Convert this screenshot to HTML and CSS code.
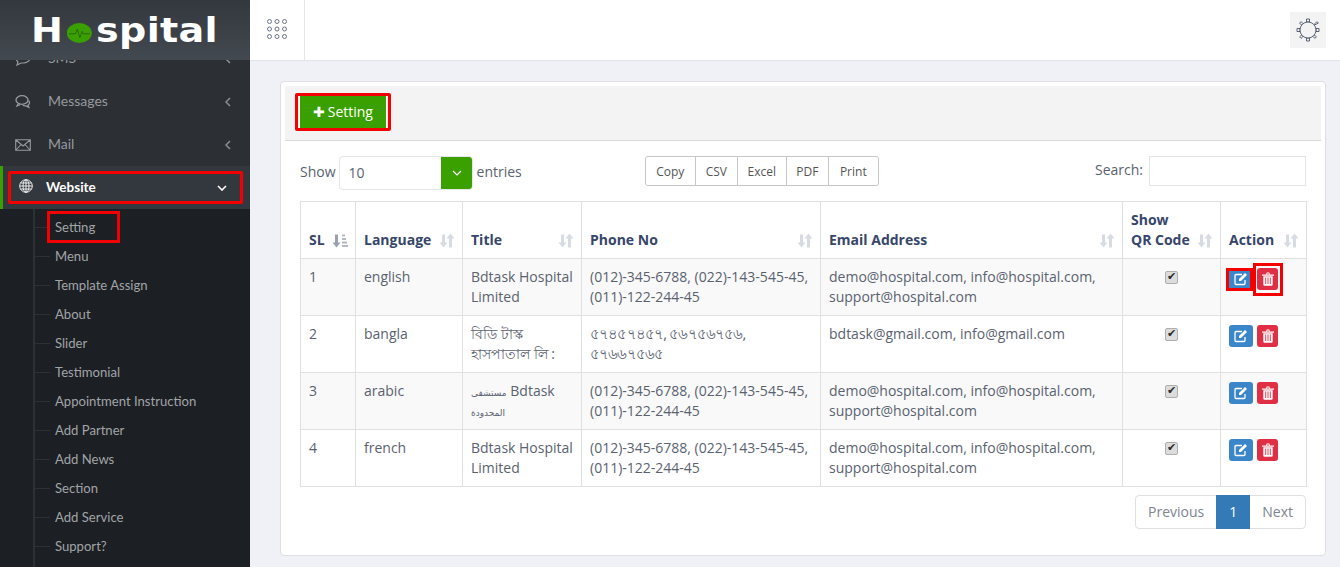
FILE: index.html
```html
<!DOCTYPE html>
<html lang="en">
<head>
<meta charset="utf-8">
<title>Hospital - Website Setting</title>
<link rel="stylesheet" href="styles.css">
</head>
<body>
<svg class="defs" width="0" height="0" aria-hidden="true">
  <symbol id="sort" viewBox="0 0 16 14">
    <path d="M3 1h3v8h2.500L4.500 14 .5 9H3zM10 5H7.500l4-5 4 5H13v9h-3z" fill="currentColor"/>
  </symbol>
  <symbol id="edit" viewBox="0 0 14 14">
    <path d="M11 8v3.500a1 1 0 0 1-1 1H2a1 1 0 0 1-1-1v-8a1 1 0 0 1 1-1h6" fill="none" stroke="currentColor" stroke-width="1.300"/>
    <path d="M5 7l6-6 2 2-6 6H5z" fill="currentColor"/>
  </symbol>
  <symbol id="trash" viewBox="0 0 12 14">
    <path d="M0 2.500h12v1.200H0zM4 2.500 4.700.5h2.600L8 2.500H7L6.700 1.500H5.300L5 2.500zM1.300 4.300h9.400v8.200a1.200 1.200 0 0 1-1.200 1.200h-7a1.200 1.200 0 0 1-1.200-1.200z" fill="currentColor"/>
    <path d="M3.700 5.500v6.500M6 5.500v6.500M8.300 5.500v6.500" stroke="#e02f44" stroke-width=".9"/>
  </symbol>
  <symbol id="chev" viewBox="0 0 6 10">
    <path d="M5 1 1 5l4 4" fill="none" stroke="currentColor" stroke-width="1.500"/>
  </symbol>
</svg>
<div class="app">
  <aside class="side">
    <div class="logo"><div class="logo-in"><span>H</span><svg class="logo-o" viewBox="0 0 26 26" preserveAspectRatio="none" aria-hidden="true"><circle cx="13" cy="13" r="13" fill="#3aa000"/><path d="M2 14h7l2-6 2.500 11 2.500-8 1 3h7" fill="none" stroke="#2a5f10" stroke-width="1"/></svg><span>spital</span></div></div>
    <nav class="nav">
      <ul class="menu">
        <li class="item">
          <svg class="ico" viewBox="0 0 16 16" aria-hidden="true"><path d="M8 2c4 0 7 2.200 7 5s-3 5-7 5H6l-4 2 1-3C2 10 1 8.500 1 7c0-2.800 3-5 7-5z" fill="none" stroke="currentColor" stroke-width="1.200"/></svg>
          <span class="lbl">SMS</span><svg class="chev"><use href="#chev"/></svg>
        </li>
        <li class="item">
          <svg class="ico" viewBox="0 0 16 16" aria-hidden="true"><ellipse cx="7" cy="6" rx="6" ry="4.300" fill="none" stroke="currentColor" stroke-width="1.300"/><path d="M3 10 2 12l3-1.300M13.500 6.500c1.500 1.500 1.300 3.500-.5 4.700l.8 2-3-1.300c-1.200.1-2.200-.1-3-.6" fill="none" stroke="currentColor" stroke-width="1.300"/></svg>
          <span class="lbl">Messages</span><svg class="chev"><use href="#chev"/></svg>
        </li>
        <li class="item">
          <svg class="ico" viewBox="0 0 16 14" aria-hidden="true"><path d="M.7 1.700h14.600v10.600H.7zM1 2l7 6 7-6M1 12l5-5.500M15 12l-5-5.500" fill="none" stroke="currentColor" stroke-width="1.100"/></svg>
          <span class="lbl">Mail</span><svg class="chev"><use href="#chev"/></svg>
        </li>
        <li class="item active">
          <div class="item-mark">
            <svg class="ico globe" viewBox="0 0 14 14" aria-hidden="true"><g fill="none" stroke="currentColor" stroke-width=".9"><circle cx="7" cy="7" r="6.300"/><ellipse cx="7" cy="7" rx="3" ry="6.300"/><path d="M7 .7v12.600M.7 7h12.600M1.500 4h11M1.500 10h11"/></g></svg>
            <span class="lbl">Website</span>
            <svg class="down" viewBox="0 0 10 6" aria-hidden="true"><path d="M1 1l4 4 4-4" fill="none" stroke="currentColor" stroke-width="1.600"/></svg>
          </div>
        </li>
      </ul>
      <ul class="sub">
        <li class="current"><span>Setting</span></li>
        <li><span>Menu</span></li>
        <li><span>Template Assign</span></li>
        <li><span>About</span></li>
        <li><span>Slider</span></li>
        <li><span>Testimonial</span></li>
        <li><span>Appointment Instruction</span></li>
        <li><span>Add Partner</span></li>
        <li><span>Add News</span></li>
        <li><span>Section</span></li>
        <li><span>Add Service</span></li>
        <li><span>Support?</span></li>
      </ul>
    </nav>
  </aside>

  <div class="main">
    <header class="top">
      <div class="apps">
        <svg viewBox="0 0 20 20" width="20" height="20" aria-hidden="true"><g fill="none" stroke="#5b6478" stroke-width=".9"><circle cx="2.500" cy="2.500" r="2"/><circle cx="10" cy="2.500" r="2"/><circle cx="17.500" cy="2.500" r="2"/><circle cx="2.500" cy="10" r="2"/><circle cx="10" cy="10" r="2"/><circle cx="17.500" cy="10" r="2"/><circle cx="2.500" cy="17.500" r="2"/><circle cx="10" cy="17.500" r="2"/><circle cx="17.500" cy="17.500" r="2"/></g></svg>
      </div>
      <button class="gear" type="button" aria-label="Settings">
        <svg viewBox="0 0 24 24" width="24" height="24" aria-hidden="true"><g fill="#f3f3f3" stroke="#4a5568" stroke-width=".9"><path d="M10.500 4V1h3v3zM10.500 20v3h3v-3zM4 10.500H1v3h3zM20 10.500h3v3h-3z"/><path d="M5.500 7 3.600 5.100l1.500-1.500L7 5.500zM19 5.500l1.900-1.900 1.500 1.500L18.500 7zM5.500 17l-1.900 1.900 1.500 1.500L7 18.500zM17 18.500l1.900 1.900 1.500-1.500-1.900-1.900z"/><circle cx="12" cy="12" r="8"/></g></svg>
      </button>
    </header>

    <section class="content">
      <div class="card">
        <div class="card-head">
          <a class="add" href="#"><b class="plus">✚</b> Setting</a>
        </div>
        <div class="card-body">
          <div class="tools">
            <div class="len">
              <span>Show</span>
              <div class="pick"><span class="pick-val">10</span><span class="pick-arrow"><svg viewBox="0 0 10 6" width="10" height="6" aria-hidden="true"><path d="M1 1l4 4 4-4" fill="none" stroke="#fff" stroke-width="1.200"/></svg></span></div>
              <span>entries</span>
            </div>
            <div class="exports">
              <button type="button" class="x50">Copy</button><button type="button" class="x42">CSV</button><button type="button" class="x49">Excel</button><button type="button" class="x42">PDF</button><button type="button" class="x50">Print</button>
            </div>
            <label class="search">Search: <input type="text"></label>
          </div>

          <table class="grid">
            <colgroup><col class="c1"><col class="c2"><col class="c3"><col class="c4"><col class="c5"><col class="c6"><col class="c7"></colgroup>
            <thead>
              <tr>
                <th><div class="th"><span>SL</span><svg class="sort on" viewBox="0 0 16 14" aria-hidden="true"><path d="M3 1h3v8h2.500L4.500 14 .5 9H3z" fill="currentColor"/><path d="M10 1h3v2h-3zM10 4.500h4v2h-4zM10 8h5v2h-5zM10 11.500h6v2h-6z" fill="#b3b8c4"/></svg></div></th>
                <th><div class="th"><span>Language</span><svg class="sort"><use href="#sort"/></svg></div></th>
                <th><div class="th"><span>Title</span><svg class="sort"><use href="#sort"/></svg></div></th>
                <th><div class="th"><span>Phone No</span><svg class="sort"><use href="#sort"/></svg></div></th>
                <th><div class="th"><span>Email Address</span><svg class="sort"><use href="#sort"/></svg></div></th>
                <th><div class="th"><span>Show<br>QR Code</span><svg class="sort"><use href="#sort"/></svg></div></th>
                <th><div class="th"><span>Action</span><svg class="sort"><use href="#sort"/></svg></div></th>
              </tr>
            </thead>
            <tbody>
              <tr>
                <td>1</td><td>english</td><td>Bdtask Hospital Limited</td>
                <td>(012)-345-6788, (022)-143-545-45, (011)-122-244-45</td>
                <td>demo@hospital.com, info@hospital.com, support@hospital.com</td>
                <td class="mid"><input class="qr" type="checkbox" checked disabled></td>
                <td class="acts"><a class="btn blue mark-a" href="#"><svg><use href="#edit"/></svg></a><a class="btn red mark-b" href="#"><svg><use href="#trash"/></svg></a></td>
              </tr>
              <tr>
                <td>2</td><td>bangla</td><td>বিডি টাস্ক হাসপাতাল লি :</td>
                <td><span class="bn">৫৭৪৫৭৪৫৭, ৫৬৭৫৬৭৫৬, ৫৭৬৬৭৫৬৫</span></td>
                <td>bdtask@gmail.com, info@gmail.com</td>
                <td class="mid"><input class="qr" type="checkbox" checked disabled></td>
                <td class="acts"><a class="btn blue" href="#"><svg><use href="#edit"/></svg></a><a class="btn red" href="#"><svg><use href="#trash"/></svg></a></td>
              </tr>
              <tr>
                <td>3</td><td>arabic</td><td><span class="ar">مستشفى</span> Bdtask <span class="ar">المحدودة</span></td>
                <td>(012)-345-6788, (022)-143-545-45, (011)-122-244-45</td>
                <td>demo@hospital.com, info@hospital.com, support@hospital.com</td>
                <td class="mid"><input class="qr" type="checkbox" checked disabled></td>
                <td class="acts"><a class="btn blue" href="#"><svg><use href="#edit"/></svg></a><a class="btn red" href="#"><svg><use href="#trash"/></svg></a></td>
              </tr>
              <tr>
                <td>4</td><td>french</td><td>Bdtask Hospital Limited</td>
                <td>(012)-345-6788, (022)-143-545-45, (011)-122-244-45</td>
                <td>demo@hospital.com, info@hospital.com, support@hospital.com</td>
                <td class="mid"><input class="qr" type="checkbox" checked disabled></td>
                <td class="acts"><a class="btn blue" href="#"><svg><use href="#edit"/></svg></a><a class="btn red" href="#"><svg><use href="#trash"/></svg></a></td>
              </tr>
            </tbody>
          </table>

          <div class="pager">
            <a class="pg first" href="#">Previous</a><a class="pg now" href="#">1</a><a class="pg last" href="#">Next</a>
          </div>
        </div>
      </div>
    </section>
  </div>
</div>
</body>
</html>
```
FILE: styles.css
```css
*, *::before, *::after { box-sizing: border-box; }
html, body { margin: 0; height: 567px; overflow: hidden; }
body {
  font-family: "Open Sans", "Noto Sans", "DejaVu Sans", sans-serif;
  font-size: 14px;
  line-height: 20px;
  color: #5a6270;
  background: #f0f1f6;
}
ul { list-style: none; margin: 0; padding: 0; }
a { text-decoration: none; color: inherit; }
.defs { position: absolute; }

.app { display: flex; height: 567px; }

/* sidebar */
.side { width: 250px; flex: none; display: flex; flex-direction: column; background: #2c2f34; }
.logo {
  height: 60px; flex: none; position: relative; z-index: 1;
  padding: 0 0 0 31px;
  background: linear-gradient(#33383e, #434950);
  color: #fff;
  font-family: "DejaVu Sans", sans-serif;
  font-weight: 700; font-size: 34px; letter-spacing: .3px;
}
.logo-in {
  display: flex; align-items: flex-start; height: 60px; line-height: 60px;
  transform: scaleX(1.12); transform-origin: 0 50%;
}
.logo-o { width: 22.300px; height: 20px; margin: 23px 3.500px 0 3.500px; flex: none; }
.nav { flex: 1; overflow: hidden; }
.menu { margin-top: -23px; }
.item {
  height: 43px; display: flex; align-items: center; padding: 0 16px 0 15px;
  color: #979a9f; font-family: "Lato", sans-serif; font-size: 14px;
}
.item .lbl { padding-bottom: 2px; }
.ico { width: 16px; height: 16px; flex: none; margin-right: 17px; }
.lbl { flex: 1; }
.chev { width: 6px; height: 10px; flex: none; margin: 0 3px 0 0; color: #8c8f94; }
.active {
  padding: 0; background: #33373e; color: #fff; font-weight: 700;
  border-left: 3px solid #3aa000; font-size: 13.500px;
}
.item-mark {
  height: 33px; width: 235px; margin-left: 5px;
  border: 3px solid #f50000;
  display: flex; align-items: center; padding: 0 13px 0 8px;
  border-radius: 2px;
}
.globe { width: 14px; height: 14px; margin-right: 13px; margin-top: -3px; }
.down { width: 10px; height: 6px; flex: none; }
.sub {
  background: #1c1f23; height: 400px; padding: 4px 0 0 34px;
  background-image: linear-gradient(#2c3136, #2c3136);
  background-repeat: no-repeat; background-size: 2px 100%; background-position: 33px 0;
}
.sub li {
  height: 29px; display: flex; align-items: center;
  color: #a2a5a8; font-family: "Lato", sans-serif; font-size: 13.100px;
  background: linear-gradient(#2c3136, #2c3136) no-repeat 0 50% / 16px 1px;
  padding: 0 0 2px 21px;
}
.sub .current span {
  outline: 3px solid #f50000;
  margin-left: -5px; padding: 3px 20px 3px 5px; line-height: 20px; width: 67px;
}

/* top bar */
.main { flex: 1; min-width: 0; display: flex; flex-direction: column; }
.top {
  height: 61px; flex: none; background: #fff; border-bottom: 1px solid #e1e3ea;
  display: flex; align-items: center; justify-content: space-between; padding-right: 14px;
}
.apps {
  width: 55px; height: 60px; border-right: 1px solid #e4e6ec;
  display: flex; align-items: center; padding: 0 0 3px 17px;
}
.gear {
  width: 36px; height: 36px; padding: 0; border: 0; background: #f3f3f3;
  display: flex; align-items: center; justify-content: center;
}

/* card */
.content { padding: 20px 14px 0 30px; }
.card {
  height: 475px; background: #fff; border: 1px solid #dfdfe2; border-radius: 4px; padding: 4px;
}
.card-head {
  height: 55px; background: #f3f3f3; border-bottom: 1px solid #d9d9d9;
  padding: 10px 0 0 14px; border-radius: 3px 3px 0 0;
}
.add {
  display: inline-flex; align-items: center; justify-content: center; gap: 3px; position: relative;
  width: 88px; height: 32px; background: #3aa000; color: #fff; font-size: 14px;
  border-left: 1px solid #fff; border-right: 1px solid #fff;
}
.add::after {
  content: ""; position: absolute; inset: -3px -5px; border: 3px solid #f50000; border-radius: 2px;
}
.plus { font-family: "DejaVu Sans", sans-serif; font-size: 14px; }
.card-body { padding: 15px 15px 0 15px; }

.tools { display: flex; align-items: flex-start; height: 45px; }
.len { display: flex; align-items: flex-start; gap: 3px; height: 34px; line-height: 32px; }
.pick {
  width: 134px; height: 34px; display: flex; border: 1px solid #e5e6e9; border-radius: 4px; background: #fff;
  overflow: hidden; margin-right: 1px;
}
.pick-val { flex: 1; padding-left: 9px; }
.pick-arrow { width: 32px; margin: -1px; background: #3aa000; display: flex; align-items: center; justify-content: center; }
.exports { display: flex; margin-left: 123px; height: 30px; border-radius: 3px; border: 1px solid #c6c6c6; }
.exports button {
  font-family: inherit; font-size: 12px; color: #555; background: #fff; border: 0; padding: 0; height: 28px;
  border-right: 1px solid #c6c6c6;
}
.x50 { width: 50px; } .x49 { width: 49px; } .x42 { width: 42px; }
.exports button:first-child { width: 50px; border-radius: 3px 0 0 3px; }
.exports button:last-child { width: 49px; border-right: 0; border-radius: 0 3px 3px 0; }
.search { display: flex; gap: 6px; height: 30px; align-items: flex-start; line-height: 28px; margin-left: auto; }
.search input { width: 157px; height: 30px; border: 1px solid #e3e4e8; background: #fff; padding: 0; }

/* table */
.grid { width: 1006px; table-layout: fixed; border-collapse: collapse; }
.c1 { width: 55px; } .c2 { width: 107px; } .c3 { width: 119px; } .c4 { width: 239px; }
.c5 { width: 302px; } .c6 { width: 98px; } .c7 { width: 86px; }
.grid th, .grid td { border: 1px solid #e0e0e0; padding: 8px; vertical-align: top; height: 57px; text-align: left; }
.grid th { vertical-align: bottom; color: #37466a; font-weight: 700; }
.th { display: flex; align-items: flex-end; justify-content: space-between; }
.sort { width: 16px; height: 15px; color: #d7dbe4; flex: none; margin: 0 -1px 2px 0; }
.sort.on { color: #9aa0ae; }
.grid tbody tr:nth-child(odd) { background: #f9f9f9; }
.ar { font-family: "DejaVu Sans", sans-serif; font-size: 9px; line-height: 1; }
.bn { font-size: 15.100px; line-height: 1; letter-spacing: -.85px; }
.mid { text-align: center !important; }
.qr {
  appearance: none; -webkit-appearance: none; width: 13px; height: 13px; margin: 4px 0 0;
  background: #dcdcdc; border: 1px solid #aeaeae; border-radius: 2px; position: relative; display: inline-block;
}
.qr::after {
  content: "✔"; position: absolute; left: 0; top: -5px; width: 11px; text-align: center;
  font: 11px/20px "DejaVu Sans", sans-serif; color: #2c2c2c;
}
.acts { padding: 9px 0 0 8px !important; }
.btn {
  display: inline-flex; align-items: center; justify-content: center; vertical-align: top; position: relative;
  height: 22px; border-radius: 3px; color: #fff;
}
.btn svg { height: 14px; width: 14px; }
.blue { width: 24px; background: #3b86c8; margin-right: 4px; }
.red { width: 21px; background: #e02f44; }
.mark-a::after, .mark-b::after { content: ""; position: absolute; border: 3px solid #f50000; }
.mark-a::after { left: -3px; top: 0; width: 27px; height: 23px; }
.mark-b::after { left: -4px; top: -5px; width: 30px; height: 33px; }

/* pager */
.pager { display: flex; justify-content: flex-end; margin-top: 8px; }
.pg { height: 34px; line-height: 32px; padding: 0 12px; border: 1px solid #e0e0e0; background: #fff; color: #7d8490; margin-left: -1px; }
.first { border-radius: 4px 0 0 4px; }
.last { border-radius: 0 4px 4px 0; }
.now { background: #337ab7; border-color: #337ab7; color: #fff; position: relative; }
```
